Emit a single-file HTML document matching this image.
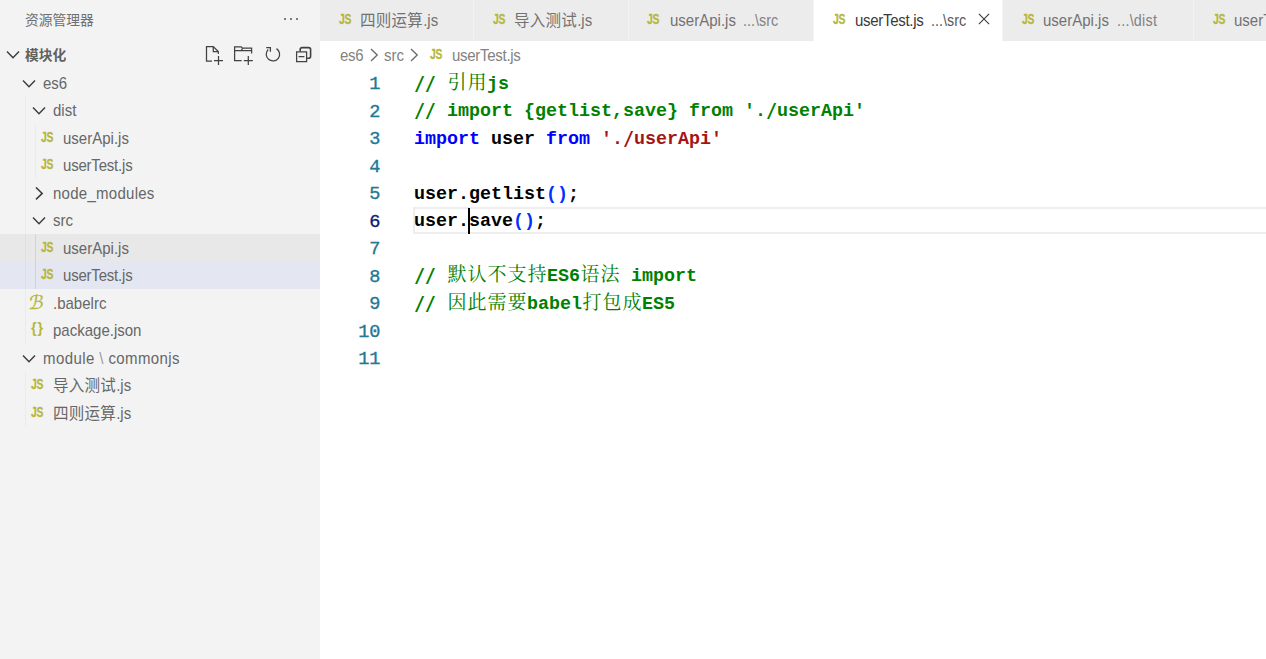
<!DOCTYPE html>
<html lang="zh-CN">
<head>
<meta charset="utf-8">
<title>userTest.js</title>
<style>
*{box-sizing:border-box;margin:0;padding:0}
html,body{width:1266px;height:659px;overflow:hidden;background:#fff}
body{position:relative;font-family:"Liberation Sans","Noto Sans CJK SC",sans-serif;color:#616161}
.abs{position:absolute}
/* ---------- sidebar ---------- */
#side{position:absolute;left:0;top:0;width:320px;height:659px;background:#f3f3f3}
#side .title{position:absolute;left:25px;top:12px;font-size:13.75px;line-height:18px;color:#6f6f6f;letter-spacing:0}
#side .dots{position:absolute;left:284px;top:18px;width:16px;height:4px}
#side .dots i{position:absolute;top:0;width:2px;height:2px;border-radius:1px;background:#555}
.row{position:absolute;left:0;width:320px;height:27.5px;font-size:15.6px;line-height:27.5px;color:#676767;white-space:nowrap}
.row span.t{position:absolute;top:1.4px}
span.t,span.d{font-size:15.7px;transform:scaleX(0.957);transform-origin:0 0}
.zh{font-size:16.25px;letter-spacing:0.25px;line-height:0}
.row.hov{background:#e8e8e8}
.row.sel{background:#e4e6f1}
.chev{position:absolute;width:14px;height:14px}
.js{position:absolute;font-family:"Liberation Sans",sans-serif;font-weight:bold;font-size:14.6px;letter-spacing:-0.3px;color:#b7b73b;-webkit-text-stroke:0.3px #b7b73b;line-height:14px;transform:scaleX(0.71);transform-origin:0 0}
.guide{position:absolute;width:1px;background:rgba(0,0,0,0.03)}
.guide.g2{background:rgba(0,0,0,0.09)}
.hdr{position:absolute;left:0;top:40.75px;width:320px;height:27.5px}
.hdr .ht{position:absolute;left:25px;top:1.3px;font-size:13.75px;font-weight:bold;line-height:27.5px;color:#616161}
.babel{position:absolute;font-family:"DejaVu Serif","DejaVu Sans",serif;font-size:19px;line-height:20px;color:#b7b73b;-webkit-text-stroke:0.3px #b7b73b;transform:skewX(-8deg)}
.json{position:absolute;font-family:"Liberation Sans",sans-serif;font-weight:bold;font-size:14.5px;line-height:16px;letter-spacing:0.9px;color:#b7b73b}
.sep{color:#9a9a9a}
/* ---------- tabs ---------- */
#tabs{position:absolute;left:320px;top:0;width:946px;height:41px;background:#f3f3f3;overflow:hidden}
.tab{position:absolute;top:0;height:41px;background:#ececec;border-right:1px solid #f3f3f3;font-size:15.6px;line-height:41px;color:#727272;white-space:nowrap}
.tab.act{background:#fff;color:#3a3a3a}
.tab>span{position:absolute;top:0}
.tab span.d{font-size:15.7px;transform:scaleX(0.915);color:#828282}
.tab.act span.d{color:#5a5a5a}
/* ---------- breadcrumbs ---------- */
#bc{position:absolute;left:320px;top:41px;width:946px;height:27px;background:#fff;font-size:15.6px;line-height:27px;color:#828282;white-space:nowrap}
#bc>span.t{position:absolute;top:0.8px}
/* ---------- editor ---------- */
#ed{position:absolute;left:320px;top:68px;width:946px;height:591px;background:#fff}
.ln{position:absolute;left:0;width:60.2px;text-align:right;font-family:"Liberation Mono",monospace;font-size:18.6px;letter-spacing:-0.16px;line-height:27.5px;color:#237893;height:27.5px;padding-top:2px;-webkit-text-stroke:0.35px #237893}
.ln.cur{color:#0b216f;-webkit-text-stroke:0.35px #0b216f}
.code{position:absolute;left:94px;height:27.5px;font-family:"Liberation Mono","Noto Serif CJK SC",monospace;font-weight:bold;font-size:18.33px;letter-spacing:0;line-height:27.5px;white-space:pre;color:#000;padding-top:1.7px}
.code .zh{font-weight:normal;letter-spacing:1px;margin-left:0.5px;margin-right:-0.5px;line-height:0;font-family:"Noto Serif CJK SC",serif;font-size:19px}
.sl{display:inline-block;line-height:0;transform:translateY(1.6px) scale(0.97,1.24);transform-origin:50% 90%}
.c{color:#008000}.k{color:#0000ff}.s{color:#a31515}.b{color:#0431fa}
#curline{position:absolute;left:93px;top:138.6px;width:870px;border-right:0;height:27.5px;border-top:2px solid #eee;border-bottom:2px solid #eee;border-left:2px solid #eee}
#caret{position:absolute;left:148px;top:139.5px;width:2px;height:26px;background:#000}
</style>
</head>
<body>
<div id="side">
  <div class="title">资源管理器</div>
  <div class="dots"><i style="left:0"></i><i style="left:6px"></i><i style="left:12px"></i></div>
<div class="hdr"><svg class="chev" style="left:6px;top:7.6px" width="14" height="14" viewBox="0 0 14 14"><path d="M1 3.5 L7 9.7 L13 3.5" fill="none" stroke="#3c3c3c" stroke-width="1.45"/></svg><span class="ht">模块化</span>
<svg class="abs" style="left:203px;top:3px" width="112" height="24" viewBox="203 44 112 24" fill="none" stroke="#424242" stroke-width="1.25">
<path d="M212 61.2 H206.5 V46.6 H213.3 L218.3 51.6 V54 M213.3 46.6 V51.6 H218.3"/>
<path d="M214 60.6 H223 M218.5 56 V65"/>
<path d="M241.6 60.6 H234.6 V46.8 H241.2 L242.6 48.2 H251.6 V53.5 M234.6 50.6 H241.2 L242.6 48.2 M241.2 50.6 H251.6"/>
<path d="M243.8 60.6 H252.8 M248.3 56 V65"/>
<path d="M276.5 48.6 A6.7 6.7 0 1 1 268.2 49.5"/>
<path d="M266.2 47.6 H270.4 V51.8" />
<path d="M296.6 51.8 H306.6 V61.6 H296.6 Z M298.6 56.7 H304.4"/>
<path d="M300.2 51.5 V49.5 Q300.2 47.6 302.2 47.6 H308.6 Q310.6 47.6 310.6 49.6 V56.2 Q310.6 58.2 308.6 58.2 H307" stroke-width="1.6"/>
</svg></div>
<div class="row " style="top:68.55px"><svg class="chev" style="left:22.3px;top:8.4px" width="14" height="14" viewBox="0 0 14 14"><path d="M1 3.5 L7 9.7 L13 3.5" fill="none" stroke="#3c3c3c" stroke-width="1.45"/></svg><span class="t" style="left:43px">es6</span></div>
<div class="row " style="top:96.05px"><svg class="chev" style="left:32.3px;top:8.4px" width="14" height="14" viewBox="0 0 14 14"><path d="M1 3.5 L7 9.7 L13 3.5" fill="none" stroke="#3c3c3c" stroke-width="1.45"/></svg><span class="t" style="left:53px">dist</span></div>
<div class="row " style="top:123.55px"><span class="js" style="left:40.8px;top:6.4px">JS</span><span class="t" style="left:63px">userApi.js</span></div>
<div class="row " style="top:151.05px"><span class="js" style="left:40.8px;top:6.4px">JS</span><span class="t" style="left:63px;letter-spacing:-0.22px">userTest.js</span></div>
<div class="row " style="top:178.55px"><svg class="chev" style="left:32.3px;top:8.4px" width="14" height="14" viewBox="0 0 14 14"><path d="M4 0.4 L10.2 6.4 L4 12.4" fill="none" stroke="#3c3c3c" stroke-width="1.5"/></svg><span class="t" style="left:53px;letter-spacing:0.27px">node_modules</span></div>
<div class="row " style="top:206.05px"><svg class="chev" style="left:32.3px;top:8.4px" width="14" height="14" viewBox="0 0 14 14"><path d="M1 3.5 L7 9.7 L13 3.5" fill="none" stroke="#3c3c3c" stroke-width="1.45"/></svg><span class="t" style="left:53px">src</span></div>
<div class="row hov" style="top:233.55px"><span class="js" style="left:40.8px;top:6.4px">JS</span><span class="t" style="left:63px">userApi.js</span></div>
<div class="row sel" style="top:261.05px"><span class="js" style="left:40.8px;top:6.4px">JS</span><span class="t" style="left:63px;letter-spacing:-0.22px">userTest.js</span></div>
<div class="row " style="top:288.55px"><span class="babel" style="left:29.3px;top:3px">ℬ</span><span class="t" style="left:53px">.babelrc</span></div>
<div class="row " style="top:316.05px"><span class="json" style="left:31px;top:4.2px">{}</span><span class="t" style="left:53px">package.json</span></div>
<div class="row " style="top:343.55px"><svg class="chev" style="left:22.3px;top:8.4px" width="14" height="14" viewBox="0 0 14 14"><path d="M1 3.5 L7 9.7 L13 3.5" fill="none" stroke="#3c3c3c" stroke-width="1.45"/></svg><span class="t" style="left:43px;letter-spacing:0.42px">module<span class="sep"> \ </span>commonjs</span></div>
<div class="row " style="top:371.05px"><span class="js" style="left:30.8px;top:6.4px">JS</span><span class="t" style="left:53px"><span class="zh">导入测试</span>.js</span></div>
<div class="row " style="top:398.55px"><span class="js" style="left:30.8px;top:6.4px">JS</span><span class="t" style="left:53px"><span class="zh">四则运算</span>.js</span></div>
<div class="guide" style="left:25px;top:96px;height:247.5px"></div>
<div class="guide" style="left:35px;top:123.5px;height:55px"></div>
<div class="guide g2" style="left:35px;top:233.5px;height:55px"></div>
<div class="guide" style="left:25px;top:371px;height:55px"></div>
</div>
<div id="tabs">
<div class="tab " style="left:0px;width:153.5px"><span class="js" style="left:19px;top:11.8px">JS</span><span class="t" style="left:40px"><span class="zh">四则运算</span>.js</span></div>
<div class="tab " style="left:153.5px;width:155.0px"><span class="js" style="left:19.5px;top:11.8px">JS</span><span class="t" style="left:40.5px"><span class="zh">导入测试</span>.js</span></div>
<div class="tab " style="left:308.5px;width:185.5px"><span class="js" style="left:18.5px;top:11.8px">JS</span><span class="t" style="left:41px">userApi.js</span><span class="d" style="left:114.5px">...\src</span></div>
<div class="tab act" style="left:494px;width:189px"><span class="js" style="left:19px;top:11.8px">JS</span><span class="t" style="left:40.5px;letter-spacing:-0.32px">userTest.js</span><span class="d" style="left:117px">...\src</span><svg class="abs" style="left:162px;top:11px" width="16" height="16" viewBox="0 0 16 16"><path d="M2.9 2.9 L13.1 13.1 M13.1 2.9 L2.9 13.1" stroke="#3a3a3a" stroke-width="1.1" fill="none"/></svg></div>
<div class="tab " style="left:683px;width:191px"><span class="js" style="left:18.5px;top:11.8px">JS</span><span class="t" style="left:40px">userApi.js</span><span class="d" style="left:114px;letter-spacing:0.25px">...\dist</span></div>
<div class="tab " style="left:874px;width:206px"><span class="js" style="left:19px;top:11.8px">JS</span><span class="t" style="left:40px">userTest.js</span><span class="d" style="left:117px">...\dist</span></div>
</div>
<div id="bc"><span class="t" style="left:20px;letter-spacing:-0.3px">es6</span><svg class="abs" style="left:47px;top:6.5px" width="14" height="14" viewBox="0 0 14 14"><path d="M4 1 L10.2 7 L4 13" fill="none" stroke="#6a6a6a" stroke-width="1.35"/></svg><span class="t" style="left:64px">src</span><svg class="abs" style="left:86.8px;top:6.5px" width="14" height="14" viewBox="0 0 14 14"><path d="M4 1 L10.2 7 L4 13" fill="none" stroke="#6a6a6a" stroke-width="1.35"/></svg><span class="js" style="left:110px;top:6px">JS</span><span class="t" style="left:132px;letter-spacing:-0.3px">userTest.js</span></div>
<div id="ed">
<div id="curline"></div>
<div class="ln" style="top:1.1px">1</div>
<div class="code" style="top:1.1px"><span class="c"><span class="sl">//</span> <span class="zh">引用</span>js</span></div>
<div class="ln" style="top:28.6px">2</div>
<div class="code" style="top:28.6px"><span class="c"><span class="sl">//</span> import {getlist,save} from '.<span class="sl">/</span>userApi'</span></div>
<div class="ln" style="top:56.1px">3</div>
<div class="code" style="top:56.1px"><span class="k">import</span> user <span class="k">from</span> <span class="s">'.<span class="sl">/</span>userApi'</span></div>
<div class="ln" style="top:83.6px">4</div>
<div class="ln" style="top:111.1px">5</div>
<div class="code" style="top:111.1px">user.getlist<span class="b">()</span>;</div>
<div class="ln cur" style="top:138.6px">6</div>
<div class="code" style="top:138.6px">user.save<span class="b">()</span>;</div>
<div class="ln" style="top:166.1px">7</div>
<div class="ln" style="top:193.6px">8</div>
<div class="code" style="top:193.6px"><span class="c"><span class="sl">//</span> <span class="zh">默认不支持</span>ES6<span class="zh">语法</span> import</span></div>
<div class="ln" style="top:221.1px">9</div>
<div class="code" style="top:221.1px"><span class="c"><span class="sl">//</span> <span class="zh">因此需要</span>babel<span class="zh">打包成</span>ES5</span></div>
<div class="ln" style="top:248.6px">10</div>
<div class="ln" style="top:276.1px">11</div>
<div id="caret"></div>
</div>
</body>
</html>
